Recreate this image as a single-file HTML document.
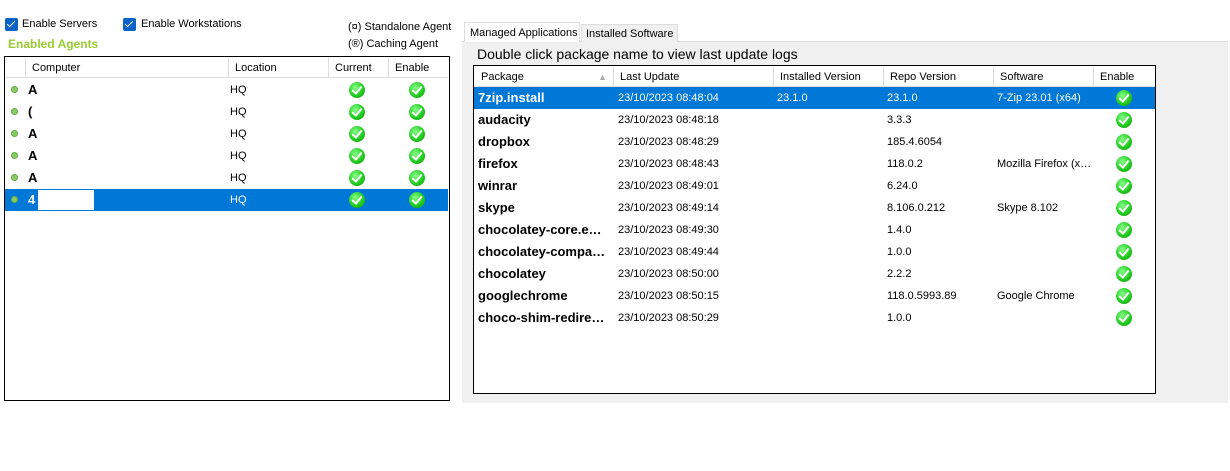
<!DOCTYPE html>
<html><head><style>
*{margin:0;padding:0;box-sizing:border-box}
body{width:1230px;height:471px;background:#fff;font-family:"Liberation Sans",sans-serif;font-size:11px;color:#000;position:relative;overflow:hidden}
.a{position:absolute;white-space:nowrap}
.cb{position:absolute;width:13px;height:13px;background:#0a64c8;border-radius:2px}
.cb:after{content:"";position:absolute;left:4px;top:1px;width:3px;height:7px;border:solid #fff;border-width:0 1.5px 1.5px 0;transform:rotate(45deg)}
.chk{position:absolute;width:16px;height:16px;border-radius:50%;background:radial-gradient(circle at 40% 35%,#8f8,#2c2 55%,#190 100%)}
.chk:after{content:"";position:absolute;left:5px;top:2px;width:4px;height:8px;border:solid #fff;border-width:0 2.5px 2.5px 0;transform:rotate(40deg)}
.dot{position:absolute;width:7px;height:7px;border-radius:50%;background:#8c6;border:1px solid #6a4}
.hd{position:absolute;top:0;height:20px;line-height:20px;padding-left:6px;border-right:1px solid #ddd;color:#000}
b{font-weight:bold;font-size:13px}
</style></head><body>
<div class="cb" style="left:5px;top:18px"></div><div class="a" style="left:22px;top:18px">Enable Servers</div>
<div class="cb" style="left:123px;top:18px"></div><div class="a" style="left:141px;top:18px">Enable Workstations</div>
<div class="a" style="left:348px;top:21px">(¤) Standalone Agent</div>
<div class="a" style="left:348px;top:38px">(®) Caching Agent</div>
<div class="a" style="left:8px;top:37px;color:#9c3;font-weight:bold;font-size:12px">Enabled Agents</div>

<div class="a" style="left:4px;top:56px;width:446px;height:345px;border:1px solid #000">
 <div class="a" style="left:1px;top:1px;width:442px;height:20px;border-bottom:1px solid #ddd">
  <div class="hd" style="left:0;width:20px"></div>
  <div class="hd" style="left:20px;width:203px">Computer</div>
  <div class="hd" style="left:223px;width:100px">Location</div>
  <div class="hd" style="left:323px;width:60px">Current</div>
  <div class="hd" style="left:383px;width:59px;border:0">Enable</div>
 </div>
</div>
<div id="L"></div>

<div class="a" style="left:462px;top:41px;width:766px;height:362px;background:#f0f0f0;border-top:1px solid #ddd"></div>
<div class="a" style="left:464px;top:22px;width:116px;height:20px;background:#fff;border:1px solid #ddd;border-bottom:0;padding:4px 0 0 5px">Managed Applications</div>
<div class="a" style="left:581px;top:24px;width:97px;height:18px;background:#f0f0f0;border:1px solid #ddd;border-bottom:0;padding:3px 0 0 4px">Installed Software</div>
<div class="a" style="left:477px;top:46px;font-size:14px">Double click package name to view last update logs</div>
<div class="a" style="left:473px;top:65px;width:683px;height:329px;border:1px solid #000;background:#fff">
 <div class="a" style="left:1px;top:1px;width:680px;height:20px;border-bottom:1px solid #ddd">
  <div class="hd" style="left:0;width:139px">Package<span style="position:absolute;right:6px;top:0;color:#aaa;font-size:9px">▲</span></div>
  <div class="hd" style="left:139px;width:160px">Last Update</div>
  <div class="hd" style="left:299px;width:110px">Installed Version</div>
  <div class="hd" style="left:409px;width:110px">Repo Version</div>
  <div class="hd" style="left:519px;width:100px">Software</div>
  <div class="hd" style="left:619px;width:61px;border:0">Enable</div>
 </div>
</div>
<div id="R"></div>
<script>
var L="",i;
for(i=0;i<6;i++){var y=79+i*22,s=i==5;
 L+=(s?'<div class="a" style="left:5px;top:'+y+'px;width:443px;height:22px;background:#0078d7"></div><div class="a" style="left:38px;top:'+(y+1)+'px;width:56px;height:20px;background:#fff"></div>':'')+
 '<div class="dot" style="left:11px;top:'+(y+7)+'px"></div><div class="a" style="left:28px;top:'+(y+3)+'px;color:'+(s?'#fff':'#000')+'"><b>'+["A","(","A","A","A","4"][i]+'</b></div>'+
 '<div class="a" style="left:230px;top:'+(y+5)+'px;color:'+(s?'#fff':'#000')+'">HQ</div><div class="chk" style="left:349px;top:'+(y+3)+'px"></div><div class="chk" style="left:409px;top:'+(y+3)+'px"></div>';}
document.getElementById('L').innerHTML=L;
var d=[["7zip.install","08:48:04","23.1.0","23.1.0","7-Zip 23.01 (x64)"],["audacity","08:48:18","","3.3.3",""],["dropbox","08:48:29","","185.4.6054",""],["firefox","08:48:43","","118.0.2","Mozilla Firefox (x…"],["winrar","08:49:01","","6.24.0",""],["skype","08:49:14","","8.106.0.212","Skype 8.102"],["chocolatey-core.e…","08:49:30","","1.4.0",""],["chocolatey-compa…","08:49:44","","1.0.0",""],["chocolatey","08:50:00","","2.2.2",""],["googlechrome","08:50:15","","118.0.5993.89","Google Chrome"],["choco-shim-redire…","08:50:29","","1.0.0",""]],R="";
d.forEach(function(r,i){var y=87+i*22,c=i==0?'#fff':'#000';
 if(i==0)R+='<div class="a" style="left:474px;top:'+y+'px;width:681px;height:22px;background:#0078d7"></div>';
 R+='<div class="a" style="left:478px;top:'+(y+3)+'px;color:'+c+'"><b>'+r[0]+'</b></div><div class="a" style="left:618px;top:'+(y+5)+'px;color:'+c+'">23/10/2023 '+r[1]+'</div><div class="a" style="left:777px;top:'+(y+5)+'px;color:'+c+'">'+r[2]+'</div><div class="a" style="left:887px;top:'+(y+5)+'px;color:'+c+'">'+r[3]+'</div><div class="a" style="left:997px;top:'+(y+5)+'px;color:'+c+'">'+r[4]+'</div><div class="chk" style="left:1116px;top:'+(y+3)+'px"></div>';});
document.getElementById('R').innerHTML=R;
</script>
</body></html>
